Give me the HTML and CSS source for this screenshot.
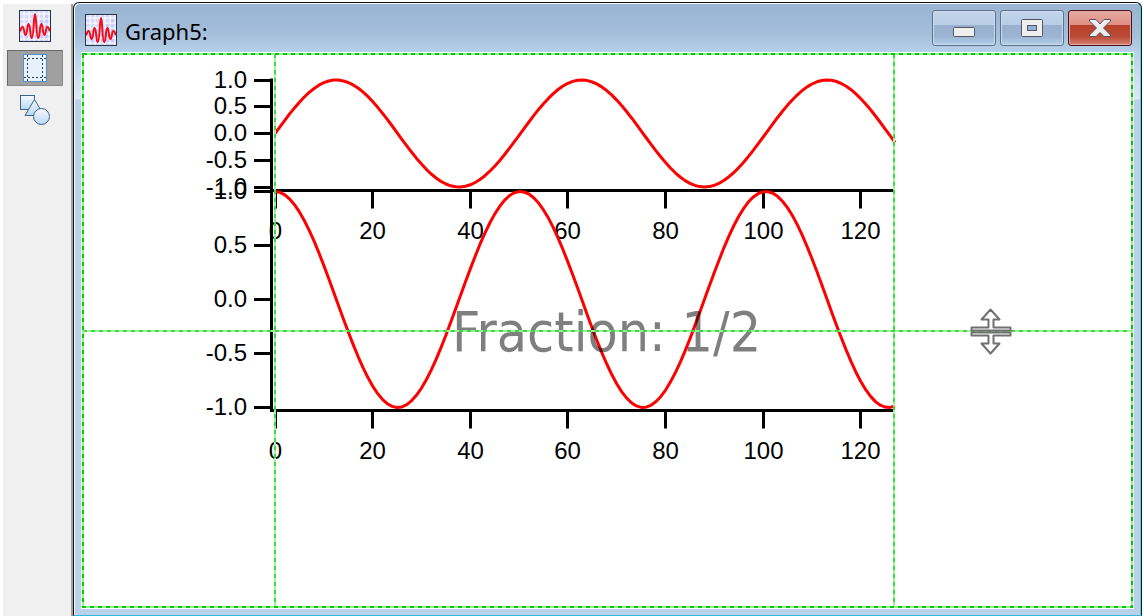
FILE: index.html
```
<!DOCTYPE html>
<html lang="en">
<head>
    <meta charset="UTF-8">
    <meta name="viewport" content="width=device-width, initial-scale=1.0">
    <title>Graph5</title>
    <link rel="stylesheet" href="styles.css">
</head>
<body>
    <svg class="defs" width="0" height="0" aria-hidden="true">
        <symbol id="wave-icon" viewBox="0 0 32 32">
            <rect width="32" height="32" fill="#c8ccfa"></rect>
            <path d="M1 1h30L1 31z" fill="#dcdffc" opacity=".7"></path>
            <path d="M5 1v30M10 1v30M15 1v30M20 1v30M25 1v30M30 1v30M1 4h30M1 9h30M1 14h30M1 19h30M1 24h30M1 29h30" stroke="#fff" stroke-width="1" fill="none"></path>
            <path d="M1 21C2 20 2 17 3.5 17C5.5 17 5 25 6.500 25C8.5 25 8 14 9.5 14C11.5 14 11 28 12.8 28C15 28 14.5 4 16 4C17.5 4 17 28 19.2 28C21 28 20.5 14 22.5 14C24 14 23.5 25 25.5 25C27 25 26.5 17 28.5 17C30 17 30 20 31 21" stroke="#f80a14" stroke-width="2" fill="none"></path>
            <rect x=".5" y=".5" width="31" height="31" fill="none" stroke="#2b3444"></rect>
        </symbol>
    </svg>

    <div class="workspace">
        <nav class="toolbar" aria-label="Graph tools">
            <button class="tool" title="Graph mode">
                <svg width="32" height="32"><use href="#wave-icon"></use></svg>
            </button>
            <button class="tool active" title="Layout guides">
                <svg width="24" height="28" viewBox="0 0 24 28">
                    <defs>
                        <linearGradient id="tool-fill" x1="0" y1="0" x2="0" y2="1">
                            <stop offset="0" stop-color="#f6fafe"></stop>
                            <stop offset="1" stop-color="#b8d8f2"></stop>
                        </linearGradient>
                    </defs>
                    <rect x=".5" y=".5" width="23" height="27" fill="#e6f1fb" stroke="#5b8fc8"></rect>
                    <path d="M4.5 1v26M19.5 1v26M1 4.5h22M1 23.5h22" stroke="#2a3f5c" stroke-dasharray="2 2" fill="none"></path>
                </svg>
            </button>
            <button class="tool" title="Drawing tools">
                <svg width="32" height="32" viewBox="0 0 32 32" fill="url(#tool-fill)" stroke="#3f6289">
                    <rect x="1.5" y="1.5" width="14" height="14"></rect>
                    <path d="M15.5 5.5L25 21.5H6z"></path>
                    <circle cx="22.5" cy="22.5" r="8"></circle>
                </svg>
            </button>
        </nav>

        <main class="window">
            <header class="titlebar">
                <svg width="32" height="32" aria-hidden="true"><use href="#wave-icon"></use></svg>
                <h1>Graph5:</h1>
                <div class="window-buttons">
                    <button class="win-btn" aria-label="Minimize">
                        <svg width="24" height="20" viewBox="0 0 24 20">
                            <rect x="1.5" y="9.5" width="21" height="9" rx="1" fill="#eee" stroke="#535666"></rect>
                        </svg>
                    </button>
                    <button class="win-btn" aria-label="Maximize">
                        <svg width="24" height="20" viewBox="0 0 24 20">
                            <rect x="1.5" y="1.5" width="21" height="17" rx="1" fill="#eee" stroke="#535666"></rect>
                            <rect x="7.5" y="7.5" width="9" height="5" fill="#93b1d3" stroke="#535666"></rect>
                        </svg>
                    </button>
                    <button class="win-btn close" aria-label="Close">
                        <svg width="24" height="20" viewBox="0 0 24 20">
                            <path d="M1.5 1.5H8L12 6L16 1.5H22.5V3L15.5 10L22.5 17V18.5H16L12 14.5L8 18.5H1.5V17L8.5 10L1.5 3z" fill="#eee" stroke="#535666" stroke-linejoin="round"></path>
                        </svg>
                    </button>
                </div>
            </header>

            <div class="graph">
                <svg class="plot" role="img" aria-label="Sine and cosine traces">
                    <g id="charts"></g>
                    <text class="fraction" x="371" y="299">Fraction: 1/2</text>
                    <svg class="guides">
                        <line class="guide-base" x1="194" y1="2" x2="194" y2="100%"></line>
                        <line class="guide-dash" x1="194" y1="2" x2="194" y2="100%"></line>
                        <line class="guide-base" x1="813" y1="2" x2="813" y2="100%"></line>
                        <line class="guide-dash" x1="813" y1="2" x2="813" y2="100%"></line>
                        <line class="guide-base" x1="2" y1="279" x2="100%" y2="279"></line>
                        <line class="guide-dash" x1="2" y1="279" x2="100%" y2="279"></line>
                    </svg>
                    <g class="frame">
                        <rect class="frame-base"></rect>
                        <rect class="frame-dash"></rect>
                    </g>
                    <!-- split cursor -->
                    <g class="cursor">
                        <path d="M909.5 257.5L918.5 267.5H912.5V275.5H929.5V278.5H890.5V275.5H907.5V267.5H900.5z"></path>
                        <path d="M909.5 301.5L918.5 291.5H912.5V283.5H929.5V280.5H890.5V283.5H907.5V291.5H900.5z"></path>
                    </g>
                </svg>
            </div>
        </main>
    </div>

    <script src="graph.js"></script>
</body>
</html>
```
FILE: styles.css
```
* {
    box-sizing: border-box;
}

body {
    margin: 0;
    background: #fff;
    font-family: "Noto Sans", "Open Sans", sans-serif;
}

.defs {
    position: absolute;
}

button {
    padding: 0;
    border: none;
    background: none;
    cursor: pointer;
}

button svg {
    display: block;
}

.workspace {
    display: flex;
    height: 100vh;
    padding: 2px 2px 0 3px;
}

.toolbar {
    display: flex;
    flex-direction: column;
    gap: 6px;
    flex: none;
    width: 70px;
    margin-top: 2px;
    padding: 4px;
    background: #f0f0f0;
    border-right: 2px solid #a0a0a0;
}

.tool {
    display: flex;
    align-items: center;
    justify-content: center;
    width: 56px;
    height: 36px;
}

.tool.active {
    background: #a0a0a0;
    border: 1px solid #8a8a8a;
    border-top-color: #696969;
    border-left-color: #696969;
}

.window {
    display: flex;
    flex-direction: column;
    flex: 1;
    min-width: 0;
    padding: 0 7px 6px;
    background: linear-gradient(#99b4d1, #a3bdda 30px, #b9d1ea 50px, #dce9f7 96px, #b9d1ea 97px);
    border: 1px solid #111;
    border-bottom-color: #35b8dc;
    border-radius: 6px 6px 0 0;
    box-shadow: inset 1px 1px 0 #f4f8fc, inset -1px 0 0 #45d3f3;
}

.titlebar {
    display: flex;
    align-items: center;
    flex: none;
    height: 49px;
    padding: 4px 2px 0 4px;
}

.titlebar h1 {
    flex: 1;
    margin: 0 8px;
    padding-top: 2px;
    font-size: 22px;
    line-height: 30px;
    font-weight: 400;
    color: #000;
}

.window-buttons {
    display: flex;
    gap: 4px;
    padding-bottom: 4px;
}

.win-btn {
    display: flex;
    align-items: center;
    justify-content: center;
    width: 64px;
    height: 36px;
    border: 1px solid #5f6f8c;
    border-radius: 3px;
    background: linear-gradient(#c2d6ea, #b8cee6 40%, #98b0cd 41%, #9cb5d2 75%, #b5cfea);
    box-shadow: inset 0 0 0 1px #c9dcf0;
}

.win-btn.close {
    border-color: #431422;
    background: linear-gradient(#e8a99f, #df8f84 40%, #b8412c 41%, #bb4a34 75%, #d48371);
    box-shadow: inset 0 0 0 1px #e5a79c;
}

.graph {
    flex: 1;
    min-height: 0;
    background: #fff;
}

.plot {
    display: block;
    width: 100%;
    height: 100%;
}

.axis {
    fill: none;
    stroke: #000;
    stroke-width: 3px;
}

.trace {
    fill: none;
    stroke: #f00;
    stroke-width: 3px;
    stroke-linejoin: round;
}

.label {
    font-family: "Liberation Sans", Arial, sans-serif;
    font-size: 24px;
    fill: #000;
}

.label-y {
    text-anchor: end;
}

.label-x {
    text-anchor: middle;
}

.fraction {
    font-family: "DejaVu Sans Condensed", Tahoma, "DejaVu Sans", sans-serif;
    font-size: 55px;
    fill: rgba(0, 0, 0, 0.5);
}

.guides {
    width: calc(100% - 2px);
    height: calc(100% - 2px);
}

.guides line {
    stroke-width: 2px;
}

.guides .guide-base {
    stroke: #a0f0a0;
}

.guides .guide-dash {
    stroke: #3fd83f;
    stroke-dasharray: 4 4;
}

.frame rect {
    x: 2px;
    y: 2px;
    width: calc(100% - 4px);
    height: calc(100% - 4px);
    fill: none;
    stroke-width: 2px;
}

.frame .frame-base {
    stroke: #99f099;
}

.frame .frame-dash {
    stroke: #00cc00;
    stroke-dasharray: 4 4;
}

.cursor path {
    fill: #fff;
    stroke: #707070;
    stroke-width: 2px;
    stroke-linejoin: round;
}
```
FILE: graph.js
```
const SVG_NS = 'http://www.w3.org/2000/svg';
const LEFT = 194;
const RIGHT = 814;
const AXIS_X = 190.5;
const POINTS = 128;

const charts = [
    { wave: Math.sin, middle: 81.5, amplitude: 53.5, bottom: 138.5 },
    { wave: Math.cos, middle: 247.5, amplitude: 108, bottom: 358.5 }
];

const root = document.getElementById('charts');

function add(tag, attrs, text) {
    const el = document.createElementNS(SVG_NS, tag);
    for (const name in attrs) {
        el.setAttribute(name, attrs[name]);
    }
    if (text) el.textContent = text;
    root.appendChild(el);
}

function toX(n) {
    return LEFT + n * (RIGHT - LEFT) / (POINTS - 1);
}

charts.forEach(function(chart) {
    const top = chart.middle - chart.amplitude;

    // Bottom axis
    let ticks = `M${AXIS_X - 1.5} ${chart.bottom}H${RIGHT - 1}`;
    for (let n = 0; n <= 120; n += 20) {
        const x = Math.floor(toX(n)) + 0.5;
        ticks += `M${x} ${chart.bottom}v18`;
        add('text', { class: 'label label-x', x: x, y: chart.bottom + 48 }, String(n));
    }

    // Left axis
    ticks += `M${AXIS_X} ${top - 1.5}V${chart.bottom}`;
    for (let v = 1; v >= -1; v -= 0.5) {
        const y = Math.floor(chart.middle - v * chart.amplitude) + 0.5;
        ticks += `M173 ${y}H${AXIS_X}`;
        add('text', { class: 'label label-y', x: 166, y: y + 7 }, v.toFixed(1));
    }
    add('path', { class: 'axis', d: ticks });

    const points = [];
    for (let n = 0; n < POINTS; n++) {
        const y = chart.middle - chart.wave(n / 8) * chart.amplitude;
        points.push(toX(n).toFixed(1) + ',' + y.toFixed(1));
    }
    add('polyline', { class: 'trace', points: points.join(' ') });
});
```
